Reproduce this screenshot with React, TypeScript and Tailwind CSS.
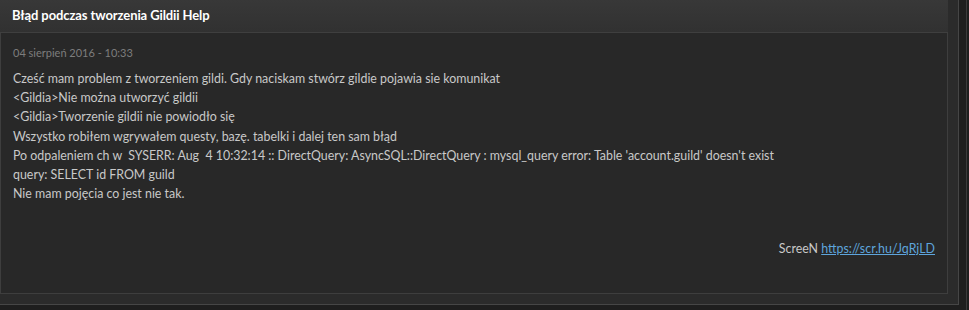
import React from "react";

const lines = [
    "Cześć mam problem z tworzeniem gildi. Gdy naciskam stwórz gildie pojawia sie komunikat",
    "<Gildia>Nie można utworzyć gildii",
    "<Gildia>Tworzenie gildii nie powiodło się",
    "Wszystko robiłem wgrywałem questy, bazę. tabelki i dalej ten sam błąd",
    "Po odpaleniem ch w  SYSERR: Aug  4 10:32:14 :: DirectQuery: AsyncSQL::DirectQuery : mysql_query error: Table 'account.guild' doesn't exist",
    "query: SELECT id FROM guild",
    "Nie mam pojęcia co jest nie tak.",
];

function App(): JSX.Element {
    return (
        <div className="flex h-[310px] w-full bg-[#1e1e1e] font-['Lato','Liberation_Sans',sans-serif]">
            <div className="w-[959px] h-[305px] bg-[#2b2b2b] border-r border-b border-[#464646] pr-[10px] pb-[10px] flex flex-col">
                {/* header */}
                <div className="h-[33px] bg-gradient-to-b from-[#383838] to-[#313131] border-b border-[#3f3f3f] px-[12px] flex items-center">
                    <h2 className="text-white text-[13px] font-bold tracking-[-0.1px]">Błąd podczas tworzenia Gildii Help</h2>
                </div>

                {/* post body */}
                <div className="flex-1 bg-[#282828] border-l border-r border-b border-[#3e3e3e] px-[12px] pt-[12px]">
                    <div className="text-[#7d7d7d] text-[11px] leading-[16px]">04 sierpień 2016 - 10:33</div>
                    <div className="mt-[8px] text-[#c9c9c9] text-[12.4px] leading-[19.2px]">
                        {lines.map((l, i) => (
                            <div key={i} className="whitespace-pre">{l}</div>
                        ))}
                        <div className="h-[36px]" />
                        <div className="text-right">
                            ScreeN <a href="#" className="text-[#5ea5dc] underline">https://scr.hu/JqRjLD</a>
                        </div>
                    </div>
                </div>
            </div>
            <div className="ml-[7px] w-px h-full bg-[#3b3b3b]" />
        </div>
    );
}

export default App;
